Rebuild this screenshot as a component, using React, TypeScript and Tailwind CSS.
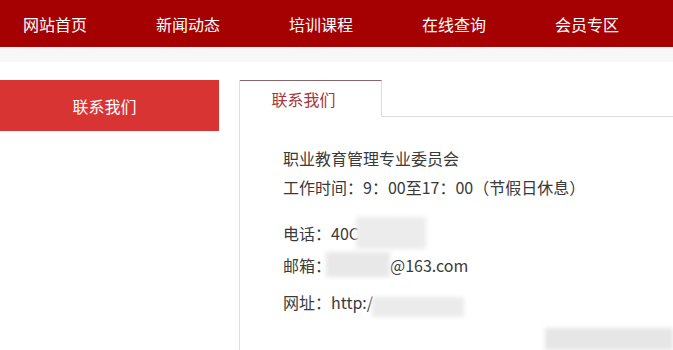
import React from "react";

export default function App() {
  const nav = ["网站首页", "新闻动态", "培训课程", "在线查询", "会员专区"];
  const font = { fontFamily: '"Microsoft YaHei","Noto Sans CJK SC","Noto Sans",sans-serif' };
  return (
    <div className="w-[673px] h-[350px] overflow-hidden bg-white relative" style={font}>
      <div className="h-[47px] bg-[#a50102] flex items-center pl-[23px] gap-[69px]">
        {nav.map((n, i) => (
          <div key={i} className="text-white text-[16px]">
            {n}
          </div>
        ))}
      </div>
      <div className="h-[15px] bg-[#f7f7f8]" />
      <div className="flex pt-[18px]">
        <div className="w-[219px] shrink-0">
          <div className="h-[51px] bg-[#d93434] flex items-center justify-center pr-[10px] text-white text-[16px]">
            联系我们
          </div>
        </div>
        <div className="ml-[20px] flex-1 border-l border-[#dcdcdc] h-[300px]">
          <div className="flex">
            <div className="w-[142px] h-[37px] border-t border-t-[#8a6468] border-r border-[#dcdcdc] flex items-center justify-center pr-[14px] text-[#a5363d] text-[16px]">
              联系我们
            </div>
            <div className="flex-1 border-b border-[#dcdcdc]" />
          </div>
          <div className="pl-[43px] text-[#3a3a3a] text-[16px] leading-[20px]">
            <div className="mt-[31px]">职业教育管理专业委员会</div>
            <div className="mt-[9px]">工作时间：9：00至17：00（节假日休息）</div>
            <div className="mt-[26px] flex items-center">
              <span>电话：40C</span>
            </div>
            <div className="mt-[12px] flex items-center">
              <span>邮箱：</span>
              <span className="inline-block w-[59px]" />
              <span>@163.com</span>
            </div>
            <div className="mt-[17px]">网址：http:/</div>
          </div>
        </div>
      </div>
      <div className="absolute left-[356px] top-[217px] w-[70px] h-[32px] bg-[#ececec] blur-[2px]" />
      <div className="absolute left-[326px] top-[252px] w-[64px] h-[25px] bg-[#e8e8e8] blur-[2px]" />
      <div className="absolute left-[372px] top-[297px] w-[92px] h-[20px] bg-[#ebebeb] blur-[2px]" />
      <div className="absolute left-[545px] top-[328px] w-[128px] h-[22px] bg-[#e6e6e6] blur-[2px]" />
    </div>
  );
}
